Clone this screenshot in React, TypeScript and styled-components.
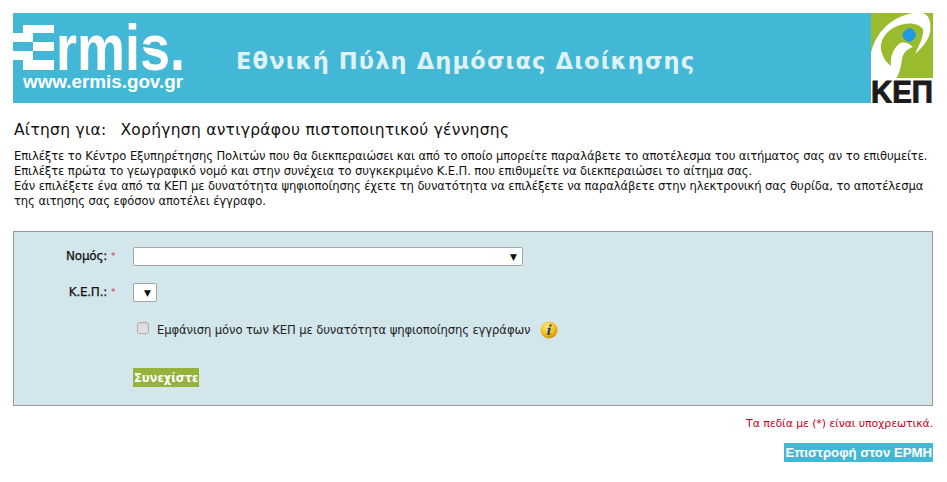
import React from 'react'
import styled, { createGlobalStyle } from 'styled-components'

const GlobalStyle = createGlobalStyle`
  html, body {
    margin: 0;
    padding: 0;
    background: #fff;
    font-family: 'DejaVu Sans', Verdana, sans-serif;
    color: #111;
  }
`
const Page = styled.div`
  width: 920px;
  padding: 13px 14px 0 13px;
`
const Header = styled.header`
  display: flex;
  align-items: center;
  height: 90px;
  background: #43b8d6;
`
const HeaderTitle = styled.h1`
  flex: 1;
  margin: 0 0 0 40px;
  padding-top: 5px;
  font-size: 22.6px;
  font-weight: bold;
  letter-spacing: 1.1px;
  color: #dff2f7;
`
const LogoText = styled.text`
  font-family: 'Liberation Sans', Arial, sans-serif;
  font-weight: bold;
  fill: #fff;
`
const KepText = styled(LogoText)`
  fill: #1d1a1a;
  stroke: #1d1a1a;
  stroke-width: 1px;
`
const RequestTitle = styled.h2`
  display: flex;
  gap: 14px;
  margin: 17px 0 0 1px;
  font-size: 15.5px;
  font-weight: normal;
  line-height: 20px;
  letter-spacing: 0.27px;
  color: #111;
`
const Intro = styled.p`
  margin: 9px 0 0 1px;
  font-size: 11.6px;
  line-height: 15px;
  letter-spacing: -0.11px;
  color: #111;
`
const FormPanel = styled.form`
  display: flex;
  flex-direction: column;
  height: 173px;
  margin-top: 22px;
  background: #d2e6ec;
  border: 1px solid #999;
`
const FieldRow = styled.div<{ $top: number }>`
  display: flex;
  align-items: center;
  margin-top: ${(p) => p.$top}px;
`
const FieldLabel = styled.label`
  width: 93px;
  padding-bottom: 2px;
  font-size: 12px;
  letter-spacing: -0.25px;
  text-align: right;
  -webkit-text-stroke: 0.25px #111;
`
const Required = styled.span`
  width: 26px;
  padding: 0 0 2px 4px;
  box-sizing: border-box;
  font-size: 9px;
  color: #e03030;
`
const FakeSelect = styled.div<{ $width: number }>`
  display: flex;
  align-items: center;
  justify-content: flex-end;
  box-sizing: border-box;
  width: ${(p) => p.$width}px;
  height: 19px;
  padding-right: 5px;
  background: #fff;
  border: 1px solid #a6a6a6;
  border-radius: 2px;
  font-size: 9px;
  color: #111;
`
const CheckRow = styled.div`
  display: flex;
  align-items: center;
  margin: 19px 0 0 123px;
`
const CheckBox = styled.span`
  display: block;
  box-sizing: border-box;
  width: 12px;
  height: 12px;
  margin-top: -4px;
  background: linear-gradient(#d8d8d8, #e6e6e6);
  border: 1px solid #ababab;
  border-radius: 3px;
`
const CheckLabel = styled.span`
  margin: 0 10px 0 8px;
  font-size: 11.6px;
  letter-spacing: -0.11px;
  color: #222;
`
const ContinueButton = styled.button`
  align-self: flex-start;
  height: 19px;
  margin: 29px 0 0 119px;
  padding: 0 1px;
  background: #95b23a;
  border: 0;
  color: #fff;
  font-family: 'DejaVu Sans', sans-serif;
  font-size: 11.5px;
  font-weight: bold;
`
const RequiredNote = styled.p`
  margin: 10px 0 0;
  font-size: 11px;
  line-height: 16px;
  letter-spacing: -0.13px;
  text-align: right;
  color: #c8001e;
`
const BackRow = styled.div`
  display: flex;
  justify-content: flex-end;
  margin-top: 11px;
`
const BackButton = styled.a`
  display: block;
  height: 19px;
  padding: 0 1px;
  background: #43b8d6;
  color: #fff;
  font-family: 'Liberation Sans', Arial, sans-serif;
  font-size: 13.2px;
  font-weight: bold;
  line-height: 19px;
`

const ErmisLogo = () => (
  <svg width="183" height="90" viewBox="0 0 183 90">
    <LogoText x="7" y="57" fontSize="65" textLength="165" lengthAdjust="spacingAndGlyphs">Ermis.</LogoText>
    <rect x="0" y="10" width="44" height="50" fill="#43b8d6" />
    <rect x="10" y="12" width="31" height="8" fill="#fff" />
    <rect x="0" y="20" width="20" height="9" fill="#fff" />
    <rect x="20" y="29" width="21" height="9" fill="#fff" />
    <rect x="0" y="38" width="20" height="9" fill="#fff" />
    <rect x="10" y="47" width="31" height="10" fill="#fff" />
    <rect x="130" y="33" width="30" height="3" fill="#43b8d6" transform="rotate(8 145 34)" />
    <LogoText x="10" y="75" fontSize="18" textLength="160" lengthAdjust="spacingAndGlyphs">www.ermis.gov.gr</LogoText>
  </svg>
)

const KepLogo = () => (
  <svg width="62" height="90" viewBox="0 0 62 90">
    <rect width="62" height="90" fill="#fff" />
    <rect width="62" height="65" fill="#9bbb2f" />
    <path d="M0 65 L0 40 C4 22 18 4 42 0 L52 0 C60 3 60 12 59 20 C57 28 50 36 44 41 C48 32 53 24 52 16 C46 9 34 9 24 14 C14 19 9 28 10 36 C11 44 16 50 20 53 C19 44 22 36 28 31 C32 28 38 30 42 34 C36 36 32 40 31 46 C30 54 28 62 25 65 Z" fill="#fff" />
    <path d="M32 20 C34 17 37 15 39 15 C41 15 44 18 45 21 C45 24 42 28 39 29 C36 29 33 26 32 24 C31 23 31 21 32 20 Z" fill="#1e9be0" />
    <KepText x="0" y="90" fontSize="32" textLength="62" lengthAdjust="spacingAndGlyphs">ΚΕΠ</KepText>
  </svg>
)

const InfoIcon = () => (
  <svg width="18" height="18" viewBox="0 0 19 19">
    <defs>
      <radialGradient id="coin" cx="40%" cy="30%" r="75%">
        <stop offset="0" stopColor="#ffe680" />
        <stop offset="0.6" stopColor="#f5bd16" />
        <stop offset="1" stopColor="#c98a05" />
      </radialGradient>
    </defs>
    <circle cx="9.5" cy="9.5" r="9" fill="url(#coin)" />
    <path d="M10.2 3.6h2.2l-.5 2.2H9.7zM9.2 7.2h2.3l-1.5 6h1.2l-.3 1.3H7.4l1.5-6.2H7.8l.2-1.1z" fill="#1d3f7a" />
  </svg>
)

export default function App() {
  return (
    <Page>
      <GlobalStyle />
      <Header>
        <ErmisLogo />
        <HeaderTitle>Εθνική Πύλη Δημόσιας Διοίκησης</HeaderTitle>
        <KepLogo />
      </Header>
      <RequestTitle>
        <span>Αίτηση για:</span>
        <span>Χορήγηση αντιγράφου πιστοποιητικού γέννησης</span>
      </RequestTitle>
      <Intro>
        Επιλέξτε το Κέντρο Εξυπηρέτησης Πολιτών που θα διεκπεραιώσει και από το οποίο μπορείτε παραλάβετε το αποτέλεσμα του αιτήματος σας αν το επιθυμείτε.
        <br />
        Επιλέξτε πρώτα το γεωγραφικό νομό και στην συνέχεια το συγκεκριμένο Κ.Ε.Π. που επιθυμείτε να διεκπεραιώσει το αίτημα σας.
        <br />
        Εάν επιλέξετε ένα από τα ΚΕΠ με δυνατότητα ψηφιοποίησης έχετε τη δυνατότητα να επιλέξετε να παραλάβετε στην ηλεκτρονική σας θυρίδα, το αποτέλεσμα της αιτησης σας εφόσον αποτέλει έγγραφο.
      </Intro>
      <FormPanel>
        <FieldRow $top={15}>
          <FieldLabel>Νομός:</FieldLabel>
          <Required>*</Required>
          <FakeSelect $width={390}>▼</FakeSelect>
        </FieldRow>
        <FieldRow $top={17}>
          <FieldLabel>Κ.Ε.Π.:</FieldLabel>
          <Required>*</Required>
          <FakeSelect $width={24}>▼</FakeSelect>
        </FieldRow>
        <CheckRow>
          <CheckBox />
          <CheckLabel>Εμφάνιση μόνο των ΚΕΠ με δυνατότητα ψηφιοποίησης εγγράφων</CheckLabel>
          <InfoIcon />
        </CheckRow>
        <ContinueButton type="button">Συνεχίστε</ContinueButton>
      </FormPanel>
      <RequiredNote>Τα πεδία με (*) είναι υποχρεωτικά.</RequiredNote>
      <BackRow>
        <BackButton>Επιστροφή στον ΕΡΜΗ</BackButton>
      </BackRow>
    </Page>
  )
}
